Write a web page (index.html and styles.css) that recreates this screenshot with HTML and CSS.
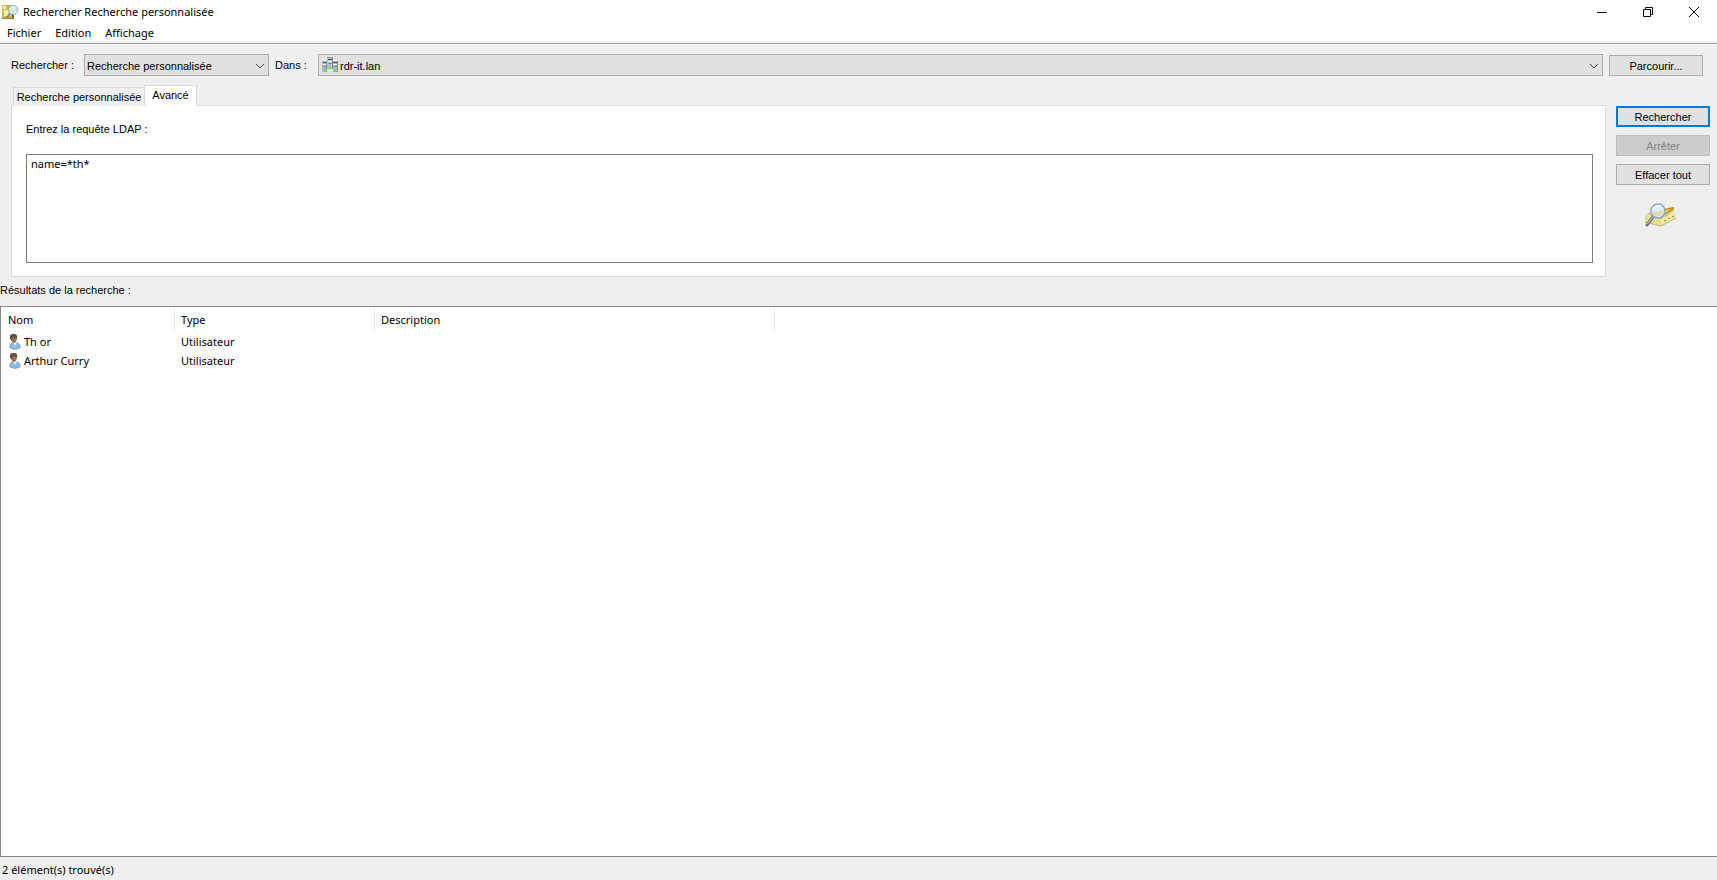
FILE: index.html
```html
<!DOCTYPE html>
<html lang="fr">
<head>
<meta charset="utf-8">
<title>Rechercher Recherche personnalisée</title>
<link rel="stylesheet" href="styles.css">
</head>
<body>
<header class="titlebar">
  <svg class="app-icon" width="16" height="16" viewBox="0 0 16 16" aria-hidden="true">
    <path d="M0 1h11v14H0z" fill="#94802b"/>
    <path d="M0 1h10v13H0z" fill="#cdb94c"/>
    <path d="M1 2h3v3H1zM2 6h6v6H2z" fill="#f5ebaa"/>
    <path d="M10 2l2 2v11l-2-1z" fill="#786a24"/>
    <path d="M8 9l-4 6" stroke="#85898e" stroke-width="2"/>
    <circle cx="11" cy="6" r="4.500" fill="#d9edf8" fill-opacity=".92" stroke="#8cabc4"/>
    <path d="M8 7q4-3 6-1-1 3-4 3z" fill="#dfe2b9"/>
    <path d="M8 5q2-3 5-2" fill="none" stroke="#fff"/>
  </svg>
  <h1 class="title">Rechercher Recherche personnalisée</h1>
  <div class="window-controls">
    <button type="button" class="window-button" aria-label="Réduire"><svg width="10" height="10" viewBox="0 0 10 10"><path d="M0 5.500h10" stroke="#000"/></svg></button>
    <button type="button" class="window-button" aria-label="Restaurer"><svg width="10" height="10" viewBox="0 0 10 10"><path d="M.5 2.500h7v7h-7zM2.500 2.500v-2h7v7h-2" fill="none" stroke="#000"/></svg></button>
    <button type="button" class="window-button" aria-label="Fermer"><svg width="10" height="10" viewBox="0 0 10 10"><path d="M0 0l10 10M10 0L0 10" stroke="#000"/></svg></button>
  </div>
</header>
<nav class="menubar">
  <button type="button" class="menu">Fichier</button>
  <button type="button" class="menu">Edition</button>
  <button type="button" class="menu">Affichage</button>
</nav>
<main class="content">
  <form class="search">
    <div class="criteria">
      <label class="find-label" for="find">Rechercher :</label>
      <div class="combo combo-find">
        <select id="find" class="combo-field"><option>Recherche personnalisée</option></select>
        <svg class="chevron" width="10" height="6" viewBox="0 0 10 6" aria-hidden="true"><path d="M1 1l4 4 4-4" fill="none" stroke="#444"/></svg>
      </div>
      <label class="scope-label" for="scope">Dans :</label>
      <div class="combo combo-scope">
        <select id="scope" class="combo-field"><option>rdr-it.lan</option></select>
        <svg class="domain-icon" width="16" height="16" viewBox="0 0 16 16" aria-hidden="true">
          <path d="M5 0h6v12H5z" fill="#b3c0c6"/>
          <path d="M5 .5h6" stroke="#8e9da4"/><path d="M6 2.500h4" stroke="#455760"/><path d="M6 4.500h4" stroke="#f4f7f8"/><path d="M6 6.500h4" stroke="#7e9099"/>
          <path d="M0 3h5v12H0zM11 3h5v12h-5z" fill="#aab9c0"/>
          <path d="M4.500 3v12M15.500 3v12M10.500 1v11" stroke="#7f9098"/>
          <path d="M1 5.500h3M11 5.500h4" stroke="#455760"/>
          <path d="M0 3.500h5M11 3.500h5M1 7.500h3M11 7.500h4" stroke="#f4f7f8"/>
          <path d="M1 9.500h3M11 9.500h4" stroke="#7e9099"/>
          <path d="M3 13h2v2H3zM7 10h2v2H7zM12 13h2v2h-2z" fill="#52ef10"/>
        </svg>
        <svg class="chevron" width="10" height="6" viewBox="0 0 10 6" aria-hidden="true"><path d="M1 1l4 4 4-4" fill="none" stroke="#444"/></svg>
      </div>
      <button type="button" class="button browse">Parcourir...</button>
    </div>
    <div class="workspace">
      <div class="tabs-area">
        <div class="tabs" role="tablist">
          <button type="button" class="tab" role="tab" aria-selected="false">Recherche personnalisée</button>
          <button type="button" class="tab tab-active" role="tab" aria-selected="true">Avancé</button>
        </div>
        <section class="panel">
          <label class="query-label" for="query">Entrez la requête LDAP :</label>
          <textarea id="query" class="query" spellcheck="false">name=*th*</textarea>
        </section>
      </div>
      <div class="actions">
        <button type="button" class="button button-default">Rechercher</button>
        <button type="button" class="button" disabled>Arrêter</button>
        <button type="button" class="button">Effacer tout</button>
        <svg class="search-art" width="32" height="26" viewBox="0 0 32 26" aria-hidden="true">
          <path d="M1 11l14-5 14-2v4l-12 9z" fill="#d8c87a"/>
          <path d="M15 7l14-3v2l-9 6z" fill="#c7930c"/>
          <path d="M14 9l12-3-8 6z" fill="#f3da72"/>
          <path d="M0 12l16 4v7L0 19z" fill="#e6dc91"/>
          <path d="M16 16l15-7v6l-15 8z" fill="#f1e9a8"/>
          <path d="M0 19l16 4 15-8" fill="none" stroke="#bfb160"/>
          <path d="M19 18l2-1M23 16l2-1M27 14l2-1" stroke="#8b8345"/>
          <path d="M8 14l-6 8" stroke="#77787d" stroke-width="3" stroke-linecap="round"/>
          <path d="M8 14l-6 7" stroke="#c6c8cc"/>
          <circle cx="13" cy="8" r="7" fill="#d9ecf7" fill-opacity=".94" stroke="#86a8c3" stroke-width="1.500"/>
          <path d="M7.500 10q6-3 11-2-1 5-6 5-3 0-5-3z" fill="#dddda9"/>
          <path d="M8 7q2-5 8-4" fill="none" stroke="#fff" stroke-width="1.500"/>
        </svg>
      </div>
    </div>
  </form>
  <h2 class="results-title">Résultats de la recherche :</h2>
  <section class="results">
    <table class="list">
      <thead><tr><th class="name-column">Nom</th><th class="type-column">Type</th><th class="description-column">Description</th></tr></thead>
      <tbody>
        <tr>
          <td><span class="entry"><svg width="12" height="16" viewBox="0 0 12 16" aria-hidden="true"><path d="M1 14q-1-4 2-5l3-1 3 1q3 1 2 5-5 3-10 0z" fill="#8fbbe3" stroke="#6990b6" stroke-width=".6"/><path d="M4 8l2 4 2-4z" fill="#e9f3fb"/><path d="M2 5q0-5 3-5 4 0 3 5-1 4-3 4Q2 8 2 5z" fill="#9b704f"/><path d="M1 5Q0 0 4 0q5 0 4 4L4 3 3 6z" fill="#5b5149"/></svg>Th or</span></td>
          <td>Utilisateur</td><td></td>
        </tr>
        <tr>
          <td><span class="entry"><svg width="12" height="16" viewBox="0 0 12 16" aria-hidden="true"><path d="M1 14q-1-4 2-5l3-1 3 1q3 1 2 5-5 3-10 0z" fill="#8fbbe3" stroke="#6990b6" stroke-width=".6"/><path d="M4 8l2 4 2-4z" fill="#e9f3fb"/><path d="M2 5q0-5 3-5 4 0 3 5-1 4-3 4Q2 8 2 5z" fill="#9b704f"/><path d="M1 5Q0 0 4 0q5 0 4 4L4 3 3 6z" fill="#5b5149"/></svg>Arthur Curry</span></td>
          <td>Utilisateur</td><td></td>
        </tr>
      </tbody>
    </table>
  </section>
</main>
<footer class="status">2 élément(s) trouvé(s)</footer>
</body>
</html>
```

FILE: styles.css
```css
* {
  box-sizing: border-box;
}

body {
  display: flex;
  flex-direction: column;
  min-height: 100vh;
  margin: 0;
  background: #efefef;
  color: #000;
  font: 11px/16px "Noto Sans", "Open Sans", sans-serif;
}

button, select, textarea {
  margin: 0;
  border-radius: 0;
  color: inherit;
  font: inherit;
}

.titlebar {
  display: flex;
  align-items: center;
  height: 23px;
  padding-left: 2px;
  background: #fff;
}

.title {
  flex: 1;
  margin: 0 0 0 5px;
  font-size: 11px;
  font-weight: 400;
}

.window-controls {
  display: flex;
}

.window-button {
  display: grid;
  place-items: center;
  width: 46px;
  height: 20px;
  padding: 0;
  border: 0;
  background: transparent;
}

.menubar {
  display: flex;
  gap: 14px;
  height: 21px;
  padding: 1px 7px 0;
  border-bottom: 1px solid #a0a0a0;
  background: linear-gradient(#fff 18px, #f0f0f0 18px);
}

.menu {
  height: 18px;
  padding: 0;
  border: 0;
  background: transparent;
}

.content {
  display: flex;
  flex: 1;
  flex-direction: column;
}

.search, .results-title {
  font: 11px/16px "Liberation Sans", Arial, sans-serif;
}

.search {
  border-top: 1px solid #fff;
}

.criteria {
  display: flex;
  align-items: center;
  padding: 9px 14px 0 11px;
}

.find-label {
  width: 73px;
}

.scope-label {
  width: 43px;
  margin-left: 6px;
}

.combo {
  position: relative;
}

.combo-find {
  width: 185px;
}

.combo-scope {
  flex: 1;
}

.combo-field {
  display: block;
  width: 100%;
  height: 22px;
  padding: 1px 20px 0 2px;
  border: 1px solid #adadad;
  appearance: none;
  background: #e1e1e1;
}

.combo-scope .combo-field {
  padding-left: 21px;
}

.chevron {
  position: absolute;
  top: 9px;
  right: 4px;
  pointer-events: none;
}

.domain-icon {
  position: absolute;
  top: 3px;
  left: 4px;
  pointer-events: none;
}

.button {
  width: 94px;
  height: 21px;
  padding: 0;
  border: 1px solid #adadad;
  background: #e1e1e1;
}

.button:disabled {
  border-color: #bfbfbf;
  background: #ccc;
  color: #838383;
}

.button-default {
  border: 2px solid #0078d7;
}

.browse {
  align-self: flex-end;
  margin-left: 6px;
}

.workspace {
  display: flex;
  gap: 10px;
  padding: 9px 7px 0 11px;
}

.tabs-area {
  flex: 1;
}

.tabs {
  display: flex;
  align-items: flex-end;
  height: 21px;
  padding-left: 2px;
}

.tab {
  width: 132px;
  height: 19px;
  padding: 0;
  border: 1px solid #dadada;
  border-bottom: 0;
  background: #f0f0f0;
}

.tab-active {
  z-index: 1;
  width: 53px;
  height: 21px;
  margin-left: -1px;
  padding-bottom: 2px;
  background: #fff;
}

.panel {
  display: flex;
  flex-direction: column;
  gap: 17px;
  margin-top: -1px;
  padding: 15px 12px 13px 14px;
  border: 1px solid #dadada;
  background: #fff;
}

.query {
  display: block;
  width: 100%;
  height: 109px;
  padding: 1px 4px;
  border: 1px solid #7a7a7a;
  outline: 0;
  background: #fff;
  font-family: "Noto Sans", "Open Sans", sans-serif;
  resize: none;
}

.actions {
  display: flex;
  flex-direction: column;
  align-items: center;
  gap: 8px;
  padding-top: 21px;
}

.search-art {
  margin: 10px 4px 0 0;
}

.results-title {
  margin: 5px 0 8px;
}

.results {
  flex: 1;
  padding-top: 1px;
  border: 1px solid #828790;
  border-right: 0;
  background: #fff;
}

.list {
  border-collapse: separate;
  border-spacing: 0;
  table-layout: fixed;
  width: 774px;
}

.list th {
  height: 24px;
  padding: 0 6px;
  border-right: 1px solid #e5e5e5;
  font-weight: 400;
  text-align: left;
}

.list td {
  height: 19px;
  padding: 0 6px;
}

.name-column {
  width: 174px;
}

.list .name-column {
  padding-left: 7px;
}

.type-column {
  width: 200px;
}

.entry {
  display: flex;
  align-items: center;
  gap: 3px;
  padding-left: 2px;
}

.status {
  height: 23px;
  padding: 5px 2px 0;
}
```
